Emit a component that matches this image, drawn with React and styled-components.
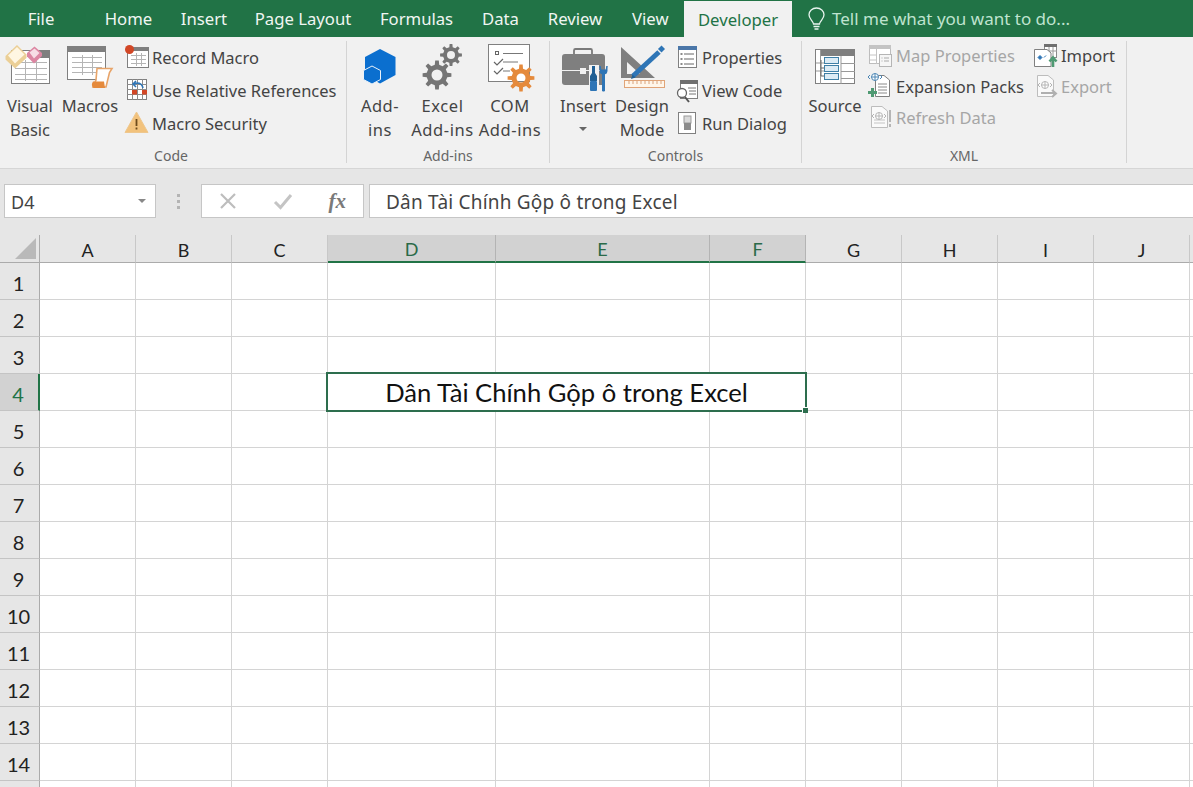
import React from 'react';
import styled, { createGlobalStyle } from 'styled-components';

const UI_FONT = '"Noto Sans", "Open Sans", sans-serif';
const SHEET_FONT = 'Lato, "Noto Sans", sans-serif';
const GREEN = '#217346';
const ICON_GRAY = '#7f7f7f';
const BLUE = '#2e75b6';
const ORANGE = '#e58a3c';

const GlobalStyle = createGlobalStyle`
  html, body {
    margin: 0;
    height: 100%;
    overflow: hidden;
    background: #fff;
  }
`;

const Page = styled.div`
  width: 1193px;
  height: 787px;
  overflow: hidden;
  font-family: ${UI_FONT};
  color: #444;
`;

/* tabs */
const TabBar = styled.div`
  display: flex;
  height: 37px;
  background: ${GREEN};
`;

const Tab = styled.div`
  display: flex;
  align-items: center;
  justify-content: center;
  flex: none;
  width: ${({ $w }) => $w}px;
  margin: ${({ $active }) => ($active ? '1px 0 0' : '0')};
  margin-right: ${({ $after }) => $after || 0}px;
  font-size: 16.7px;
  background: ${({ $active }) => ($active ? '#f1f1f1' : 'transparent')};
  color: ${({ $active }) => ($active ? GREEN : '#f0f6f2')};
`;

const TellMe = styled.div`
  display: flex;
  align-items: center;
  gap: 7px;
  margin-left: 16px;
  font-size: 17px;
  color: #bfe3cf;
`;

/* ribbon */
const Ribbon = styled.div`
  display: flex;
  height: 132px;
  box-sizing: border-box;
  background: #f1f1f1;
  border-bottom: 1px solid #d6d6d6;
`;

const Group = styled.section`
  display: flex;
  flex-direction: column;
  flex: none;
  box-sizing: border-box;
  width: ${({ $w }) => $w}px;
  height: 122px;
  margin-top: 4px;
  border-right: 1px solid #d4d4d4;
`;

const GroupBody = styled.div`
  display: flex;
  flex: 1;
  min-height: 0;
  gap: ${({ $gap }) => $gap || 0}px;
  padding-left: ${({ $pad }) => $pad || 0}px;
`;

const GroupLabel = styled.div`
  height: 14px;
  padding-right: ${({ $nudge }) => $nudge || 0}px;
  line-height: 14px;
  text-align: center;
  font-size: 14px;
  color: #666;
`;

const LargeButton = styled.div`
  flex: none;
  width: ${({ $w }) => $w}px;
  margin-left: ${({ $left }) => $left || 0}px;
  padding-top: 3px;
  font-size: 16.5px;
  line-height: 24px;
  letter-spacing: ${({ $track }) => $track || 0}px;
  text-align: center;
  white-space: pre-line;
  color: #444;
`;

const LargeLabel = styled.div`
  margin-top: 4px;
`;

const Caret = styled.div`
  width: 0;
  height: 0;
  margin: ${({ $inline }) => ($inline ? '0' : '9px auto 0')};
  border-left: 4px solid transparent;
  border-right: 4px solid transparent;
  border-top: 4px solid ${({ $inline }) => ($inline ? '#888' : '#666')};
`;

const SmallColumn = styled.div`
  display: flex;
  flex-direction: column;
  flex: none;
  margin: ${({ $top }) => $top || 0}px 0 0 ${({ $left }) => $left || 0}px;
`;

const SmallItem = styled.div`
  display: flex;
  align-items: center;
  height: ${({ $h }) => $h}px;
  gap: ${({ $gap }) => $gap}px;
  font-size: 16.5px;
  white-space: nowrap;
  color: ${({ $disabled }) => ($disabled ? '#a6a6a6' : '#444')};
`;

const Glyph = styled.svg`
  display: block;
  flex: none;
  overflow: visible;
`;

/* formula bar */
const FormulaStrip = styled.div`
  display: flex;
  height: 66px;
  box-sizing: border-box;
  padding: 15px 0 0 4px;
  background: #e6e6e6;
`;

const FieldBox = styled.div`
  display: flex;
  align-items: center;
  flex: ${({ $grow }) => ($grow ? 1 : 'none')};
  box-sizing: border-box;
  width: ${({ $w }) => ($w ? `${$w}px` : 'auto')};
  height: 34px;
  margin-left: ${({ $left }) => $left || 0}px;
  background: #fff;
  border: 1px solid #c6c6c6;
  border-right-width: ${({ $grow }) => ($grow ? 0 : 1)}px;
  padding: 0 ${({ $pr }) => $pr || 0}px 0 ${({ $pl }) => $pl || 0}px;
  font-size: 18px;
  color: #444;
`;

const NameText = styled.span`
  flex: 1;
  padding-top: 1px;
`;

const GripDots = styled.div`
  display: flex;
  flex-direction: column;
  justify-content: center;
  align-items: center;
  gap: 3px;
  flex: none;
  width: 45px;
  height: 34px;
  i {
    width: 3px;
    height: 3px;
    background: #b4b4b4;
  }
`;

const FxButtons = styled.div`
  display: flex;
  align-items: center;
  justify-content: space-between;
  flex: 1;
  padding: 0 17px 0 17px;
`;

const FxMark = styled.span`
  font-family: "Liberation Serif", serif;
  font-style: italic;
  font-weight: 700;
  font-size: 21px;
  color: #7a7a7a;
`;

const FormulaValue = styled.span`
  padding-top: 1px;
  font-size: 19px;
  letter-spacing: 0.2px;
  white-space: nowrap;
`;

/* sheet */
const Sheet = styled.div`
  display: grid;
  grid-template-columns: 40px 96px 96px 96px 168px 214px repeat(6, 96px);
  grid-template-rows: 28px;
  grid-auto-rows: 37px;
  font-family: ${SHEET_FONT};
`;

const Corner = styled.div`
  display: flex;
  box-sizing: border-box;
  background: #e6e6e6;
  border-right: 1px solid #ababab;
  border-bottom: 1px solid #ababab;
  padding: 3px 0 0 15px;
`;

const ColHeader = styled.div`
  display: flex;
  align-items: center;
  justify-content: center;
  box-sizing: border-box;
  padding-top: 2px;
  font-size: 18px;
  background: ${({ $on }) => ($on ? '#d2d2d2' : '#e6e6e6')};
  color: ${({ $on }) => ($on ? '#2a6a48' : '#222')};
  border-right: 1px solid ${({ $on }) => ($on ? '#b4b4b4' : '#c8c8c8')};
  border-bottom: ${({ $on }) => ($on ? `2px solid ${GREEN}` : '1px solid #ababab')};
`;

const RowHeader = styled.div`
  display: flex;
  align-items: center;
  justify-content: center;
  box-sizing: border-box;
  grid-column: 1;
  padding: 3px 2px 0 0;
  font-size: 20px;
  background: ${({ $on }) => ($on ? '#d2d2d2' : '#e6e6e6')};
  color: ${({ $on }) => ($on ? GREEN : '#222')};
  border-right: ${({ $on }) => ($on ? `2px solid ${GREEN}` : '1px solid #ababab')};
  border-bottom: 1px solid #c4c4c4;
`;

const Cell = styled.div`
  box-sizing: border-box;
  background: #fff;
  border-right: 1px solid #d4d4d4;
  border-bottom: 1px solid #d4d4d4;
`;

const MergedCell = styled.div`
  position: relative;
  z-index: 1;
  display: flex;
  align-items: center;
  justify-content: center;
  grid-column: 5 / 8;
  margin: 0 1px 1px 0;
  background: #fff;
  outline: 2px solid #2d6e4e;
  font-size: 25.6px;
  color: #111;
  white-space: nowrap;
`;

const FillHandle = styled.i`
  position: absolute;
  right: -3px;
  bottom: -3px;
  width: 5px;
  height: 5px;
  background: #2d6e4e;
  border: 1px solid #fff;
  border-width: 1px 0 0 1px;
`;

const Art = ({ x, y, w, h, children }) => (
  <Glyph width={w} height={h} viewBox={`${x} ${y} ${w} ${h}`} fill="none">
    {children}
  </Glyph>
);

const gearPath = (cx, cy, outer, inner, hole, teeth = 8) => {
  const pts = [];
  const step = (Math.PI * 2) / teeth;
  for (let i = 0; i < teeth; i += 1) {
    const a = i * step;
    [[-0.27, inner], [-0.16, outer], [0.16, outer], [0.27, inner]].forEach(([k, r]) => {
      pts.push(`${(cx + r * Math.cos(a + k * step)).toFixed(2)} ${(cy + r * Math.sin(a + k * step)).toFixed(2)}`);
    });
  }
  const ring = `M${cx - hole} ${cy}a${hole} ${hole} 0 1 0 ${hole * 2} 0a${hole} ${hole} 0 1 0 ${-hole * 2} 0Z`;
  return `M${pts.join('L')}Z${ring}`;
};

const Gear = ({ cx, cy, outer, inner, hole, fill }) => (
  <path d={gearPath(cx, cy, outer, inner, hole)} fill={fill} fillRule="evenodd" />
);

const SheetLines = ({ x1, x2, ys, xs, y1, y2, color = '#b5b5b5' }) => (
  <g stroke={color} strokeWidth="1">
    {ys.map((y) => (
      <path key={`h${y}`} d={`M${x1} ${y}H${x2}`} />
    ))}
    {(xs || []).map((x) => (
      <path key={`v${x}`} d={`M${x} ${y1}V${y2}`} />
    ))}
  </g>
);

const Globe = ({ cx, cy, color }) => (
  <g stroke={color} strokeWidth="1">
    <circle cx={cx} cy={cy} r="3.5" fill="#fff" />
    <path d={`M${cx - 3.5} ${cy}h7M${cx} ${cy - 3.5}v7`} />
    <path d={`M${cx - 5} ${cy - 2}l-2 2l2 2M${cx + 5} ${cy - 2}l2 2l-2 2`} />
  </g>
);

const VisualBasicIcon = () => (
  <Art x={3} y={44} w={54} h={46}>
    <rect x="11.5" y="50.5" width="38" height="33" fill="#fff" stroke="#808080" />
    <rect x="40" y="50" width="10" height="8" fill={ICON_GRAY} />
    <SheetLines x1={15} x2={47} ys={[62.5, 68.5, 74.5, 79.5]} xs={[25.5, 36.5]} y1={60} y2={81} />
    <path d="M5.500 56L17 45L26.500 54.500V58L15 68.500L5.500 59.500Z" fill="#ebcf96" />
    <path d="M8 55.500L17 47L24.500 54.500L15 63.500Z" fill="#fff6e2" />
    <path d="M27 53L34.500 46.500L42 53V56L34 63.500L27 56.500Z" fill="#dc86a2" />
    <path d="M29.500 52.500L34.500 48.500L39.500 53L34 58.500Z" fill="#f7dde5" />
  </Art>
);

const MacrosIcon = () => (
  <Art x={60} y={44} w={60} h={46}>
    <rect x="67.5" y="46.5" width="38" height="33" fill="#fff" stroke="#808080" />
    <rect x="67" y="46" width="39" height="6" fill={ICON_GRAY} />
    <SheetLines x1={72} x2={102} ys={[57.5, 62.5, 67.5, 72.5]} xs={[82.5, 92.5]} y1={55} y2={75} />
    <path d="M97 68.5H112L109.5 72.5L106 87H93L96 80Z" fill="#fff" stroke="#e8a469" strokeWidth="1.6" />
    <path d="M93 81.5H104L105 88H93.5Q90.5 85 93 81.5Z" fill={ORANGE} />
  </Art>
);

const RecordIcon = () => (
  <Art x={125} y={41} w={25} h={33}>
    <rect x="127.5" y="47.5" width="21" height="20" fill="#fff" stroke="#808080" />
    <rect x="127" y="47" width="22" height="4" fill={ICON_GRAY} />
    <SheetLines x1={131} x2={146} ys={[55.5, 59.5, 63.5]} xs={[136.5, 141.5]} y1={53} y2={66} />
    <circle cx="129.5" cy="49.5" r="4.5" fill="#d24726" />
  </Art>
);

const RelativeIcon = () => (
  <Art x={125} y={74} w={25} h={33}>
    <rect x="127.5" y="79.5" width="19" height="20" fill="#fff" stroke="#808080" />
    <SheetLines x1={127} x2={147} ys={[84.5, 89.5, 94.5]} xs={[132.5, 137.5, 142.5]} y1={79} y2={100} color="#8c8c8c" />
    <rect x="132" y="90" width="5" height="4.5" fill="#d24726" />
    <rect x="142" y="90" width="5" height="4.5" fill="#d24726" />
    <path d="M143 88q-1-5-6-5l-3 1M136 81l-3 3l3 3" stroke={BLUE} strokeWidth="1.6" />
  </Art>
);

const SecurityIcon = () => (
  <Art x={125} y={107} w={25} h={33}>
    <path d="M136.5 112L148 132.5H125Z" fill="#f2c27c" stroke="#eec78e" strokeLinejoin="round" />
    <path d="M136.5 119v7M136.5 127.5v2" stroke="#6e4b1b" strokeWidth="1.8" />
  </Art>
);

const AddInIcon = () => (
  <Art x={360} y={44} w={40} h={46}>
    <path d="M380 49L395.500 57V75L380 83.500L365 75V57Z" fill="#0b6fcf" />
    <path d="M372 66L380.500 70.500V79.500L372 84L363.500 79.500V70.500Z" fill="#0b6fcf" stroke="#eaf2fa" strokeWidth="1" />
  </Art>
);

const ExcelAddInIcon = () => (
  <Art x={409} y={44} w={67} h={46}>
    <Gear cx={437} cy={75} outer={14.5} inner={10.5} hole={5.5} fill="#757575" />
    <Gear cx={451} cy={55} outer={11} inner={8} hole={4} fill="#757575" />
  </Art>
);

const ComAddInIcon = () => (
  <Art x={476} y={44} w={68} h={46}>
    <rect x="488.5" y="44.5" width="41" height="37" fill="#fff" stroke="#808080" />
    <rect x="495.5" y="51.5" width="3" height="3" stroke="#666" />
    <path d="M503 53.5H523M503 62H518M503 71H510" stroke="#777" />
    <path d="M494 62l3 3l6-6M494 71l3 3l6-6" stroke="#666" strokeWidth="1.2" />
    <Gear cx={521} cy={78} outer={13.5} inner={9.5} hole={4.5} fill={ORANGE} />
  </Art>
);

const InsertIcon = () => (
  <Art x={558} y={44} w={50} h={46}>
    <path d="M574 54V50.5Q574 49 575.5 49H590.5Q592 49 592 50.5V54" stroke="#7a7a7a" strokeWidth="1.8" />
    <rect x="562" y="54" width="43" height="31" rx="3" fill={ICON_GRAY} />
    <path d="M562 70.5H605" stroke="#f1f1f1" />
    <rect x="580" y="68" width="6" height="6" fill="#f1f1f1" />
    <path d="M589 65h10v26h-10Z" fill="#f1f1f1" />
    <path d="M592 66h3v7l2 3v5h-7v-5l2-3Z" fill="#1f5f94" />
    <rect x="590" y="81" width="7" height="10" rx="1" fill={BLUE} />
    <path d="M600 66v5q0 3 2.500 3v17h2v-17q2.500 0 2.500-3v-5l-1 4h-5Z" fill={BLUE} stroke={BLUE} />
  </Art>
);

const DesignIcon = () => (
  <Art x={612} y={44} w={60} h={46}>
    <path d="M621 47L655 78H621ZM627 62V74H640Z" fill={ICON_GRAY} fillRule="evenodd" />
    <path d="M633 76L659 52" stroke={BLUE} strokeWidth="5" />
    <path d="M631 79l1.500-4.500l3 3Z" fill="#1f5f94" />
    <rect x="659" y="46.500" width="5" height="5" transform="rotate(45 661.5 49)" fill={BLUE} />
    <rect x="624.500" y="80.500" width="40" height="7" fill="#fff6ea" stroke="#e0a478" />
    <path d="M629 81v3M633 81v3M637 81v3M641 81v3M645 81v3M649 81v3M653 81v3M657 81v3M661 81v3" stroke="#d9a27a" />
  </Art>
);

const PropertiesIcon = () => (
  <Art x={676} y={41} w={24} h={33}>
    <rect x="678.500" y="46.500" width="18" height="21" fill="#fff" stroke="#808080" />
    <rect x="678" y="46" width="19" height="4" fill="#4a76a8" />
    <path d="M684 54H694M684 59H694M684 64H694" stroke="#666" />
    <path d="M680.500 54h2M680.500 59h2M680.500 64h2" stroke="#666" strokeWidth="1.400" />
  </Art>
);

const ViewCodeIcon = () => (
  <Art x={676} y={74} w={24} h={33}>
    <rect x="680.500" y="80.500" width="17" height="18" fill="#fff" stroke="#808080" />
    <rect x="680" y="80" width="18" height="4" fill="#6f6f6f" />
    <path d="M688 88H696M689 91H696M689 94H696" stroke="#777" />
    <circle cx="682" cy="93" r="4.500" fill="#fff" stroke="#666" strokeWidth="1.300" />
    <path d="M685 97L689 102" stroke="#555" strokeWidth="2" />
  </Art>
);

const RunDialogIcon = () => (
  <Art x={676} y={107} w={24} h={33}>
    <rect x="678.500" y="112.500" width="17" height="21" fill="#fff" stroke="#808080" />
    <rect x="684" y="116" width="7" height="7" fill="#d9d9d9" stroke="#9a9a9a" />
    <rect x="684" y="123" width="7" height="7" fill="#8c8c8c" />
  </Art>
);

const SourceIcon = () => (
  <Art x={807} y={44} w={56} h={46}>
    <rect x="815.500" y="49.500" width="39" height="34" fill="#fff" stroke="#808080" />
    <rect x="821" y="49" width="34" height="7" fill={ICON_GRAY} />
    <path d="M820.500 50V84M841 56V84M841 63.500H855M841 71.500H855M841 78.500H855M816 63H824M816 71H824" stroke="#999" />
    <path d="M821 60V76H824M821 68H824" stroke="#666" />
    <rect x="824.500" y="57.500" width="14" height="6" fill="#dcebf5" stroke="#3f7fa6" />
    <rect x="824.500" y="65.500" width="14" height="6" fill="#dcebf5" stroke="#3f7fa6" />
    <rect x="824.500" y="73.500" width="14" height="6" fill="#dcebf5" stroke="#3f7fa6" />
  </Art>
);

const MapIcon = () => (
  <Art x={868} y={40} w={24} h={31}>
    <rect x="869.500" y="45.500" width="21" height="18" fill="#fff" stroke="#bdbdbd" />
    <rect x="869" y="45" width="22" height="4" fill="#c4c4c4" />
    <path d="M876.500 49V64M870 55H876M870 60H876" stroke="#c4c4c4" />
    <rect x="879.500" y="54.500" width="12" height="12" fill="#f6f6f6" stroke="#b5b5b5" />
    <path d="M884 58H889M884 61H889M881.500 58h1M881.500 61h1" stroke="#aaa" />
  </Art>
);

const ExpansionIcon = () => (
  <Art x={868} y={71} w={24} h={31}>
    <path d="M875.500 75.500H884L889.500 80V96.500H875.500Z" fill="#fff" stroke="#7f7f7f" />
    <path d="M878 84H887M878 87H887M878 90H887M878 93H887" stroke="#8a8a8a" />
    <Globe cx={875} cy={77} color="#4c86b4" />
    <path d="M872.500 88V97M868 92.500H877" stroke="#4f9a73" strokeWidth="3" />
  </Art>
);

const RefreshIcon = () => (
  <Art x={868} y={102} w={24} h={31}>
    <path d="M871.500 106.500H882L887.500 111V127.500H871.500Z" fill="#fafafa" stroke="#bdbdbd" />
    <path d="M874 120H885M874 123H885" stroke="#c4c4c4" />
    <Globe cx={879} cy={116} color="#b5b5b5" />
    <path d="M890 110V122M890 124V127" stroke="#b5b5b5" strokeWidth="2" />
  </Art>
);

const ImportIcon = () => (
  <Art x={1033} y={40} w={25} h={31}>
    <rect x="1043.500" y="44.500" width="12" height="13" fill="#fff" stroke="#8a8a8a" />
    <rect x="1043" y="44" width="13" height="3" fill="#6f6f6f" />
    <path d="M1048 47V58M1052 47V58M1044 51H1056" stroke="#9a9a9a" />
    <path d="M1033.500 49.500H1046L1050 53V66.500H1033.500Z" fill="#fff" stroke="#808080" />
    <path d="M1037 57.500l2-2l2 2l-2 2ZM1043 57.500l2-2" fill="#2e75b6" stroke="#2e75b6" />
    <path d="M1052 67V59M1048.500 61.500L1052 57.500L1055.500 61.500" stroke="#4f9a73" strokeWidth="2.600" />
  </Art>
);

const ExportIcon = () => (
  <Art x={1033} y={71} w={25} h={31}>
    <path d="M1036.500 75.500H1047L1052.500 80V96.500H1036.500Z" fill="#fafafa" stroke="#bdbdbd" />
    <Globe cx={1044} cy={85} color="#b5b5b5" />
    <path d="M1040 93H1054M1051 90L1055 93.500L1051 97" stroke="#b0b0b0" strokeWidth="2" />
  </Art>
);

const BulbIcon = () => (
  <Glyph width="17" height="24" viewBox="0 0 17 24" fill="none">
    <path
      d="M5.500 17C5 13.500 1 12 1 7.800C1 3.800 4.300 1 8.500 1S16 3.800 16 7.800C16 12 12 13.500 11.500 17Z"
      stroke="#e8f4ee"
      strokeWidth="1.300"
    />
    <path d="M5.500 19.500H11.500M6.500 22H10.500" stroke="#e8f4ee" strokeWidth="1.300" />
  </Glyph>
);

const TABS = [
  { name: 'File', w: 82, after: 7.5 },
  { name: 'Home', w: 78 },
  { name: 'Insert', w: 73 },
  { name: 'Page Layout', w: 125 },
  { name: 'Formulas', w: 102 },
  { name: 'Data', w: 66 },
  { name: 'Review', w: 83 },
  { name: 'View', w: 67.5 },
];

const COLUMNS = ['A', 'B', 'C', 'D', 'E', 'F', 'G', 'H', 'I', 'J', 'K'];
const SELECTED_COLUMNS = ['D', 'E', 'F'];
const OFFSCREEN_COLUMN = 'K';
const ROWS = Array.from({ length: 15 }, (_, i) => i + 1);
const LAST_VISIBLE_LABEL = 14;
const CELL_TEXT = 'Dân Tài Chính Gộp ô trong Excel';

const App = () => (
  <Page>
    <GlobalStyle />
    <TabBar>
      {TABS.map((tab) => (
        <Tab key={tab.name} $w={tab.w} $after={tab.after}>
          {tab.name}
        </Tab>
      ))}
      <Tab $w={108} $active>
        Developer
      </Tab>
      <TellMe>
        <BulbIcon />
        Tell me what you want to do...
      </TellMe>
    </TabBar>

    <Ribbon>
      <Group $w={347}>
        <GroupBody $pad={3}>
          <LargeButton $w={54}>
            <VisualBasicIcon />
            <LargeLabel>{'Visual\nBasic'}</LargeLabel>
          </LargeButton>
          <LargeButton $w={60} $left={3}>
            <MacrosIcon />
            <LargeLabel>Macros</LargeLabel>
          </LargeButton>
          <SmallColumn $left={5}>
            <SmallItem $h={33} $gap={2}>
              <RecordIcon />
              Record Macro
            </SmallItem>
            <SmallItem $h={33} $gap={2}>
              <RelativeIcon />
              Use Relative References
            </SmallItem>
            <SmallItem $h={33} $gap={2}>
              <SecurityIcon />
              Macro Security
            </SmallItem>
          </SmallColumn>
        </GroupBody>
        <GroupLabel $nudge={4}>Code</GroupLabel>
      </Group>

      <Group $w={203}>
        <GroupBody $pad={13}>
          <LargeButton $w={40} $track={0.5}>
            <AddInIcon />
            <LargeLabel>{'Add-\nins'}</LargeLabel>
          </LargeButton>
          <LargeButton $w={67} $left={9} $track={0.6}>
            <ExcelAddInIcon />
            <LargeLabel>{'Excel\nAdd-ins'}</LargeLabel>
          </LargeButton>
          <LargeButton $w={68} $track={0.6}>
            <ComAddInIcon />
            <LargeLabel>{'COM\nAdd-ins'}</LargeLabel>
          </LargeButton>
        </GroupBody>
        <GroupLabel>Add-ins</GroupLabel>
      </Group>

      <Group $w={252}>
        <GroupBody $pad={8} $gap={4}>
          <LargeButton $w={50}>
            <InsertIcon />
            <LargeLabel>Insert</LargeLabel>
            <Caret />
          </LargeButton>
          <LargeButton $w={60}>
            <DesignIcon />
            <LargeLabel>{'Design\nMode'}</LargeLabel>
          </LargeButton>
          <SmallColumn>
            <SmallItem $h={33} $gap={2}>
              <PropertiesIcon />
              Properties
            </SmallItem>
            <SmallItem $h={33} $gap={2}>
              <ViewCodeIcon />
              View Code
            </SmallItem>
            <SmallItem $h={33} $gap={2}>
              <RunDialogIcon />
              Run Dialog
            </SmallItem>
          </SmallColumn>
        </GroupBody>
        <GroupLabel>Controls</GroupLabel>
      </Group>

      <Group $w={325}>
        <GroupBody $pad={5}>
          <LargeButton $w={56}>
            <SourceIcon />
            <LargeLabel>Source</LargeLabel>
          </LargeButton>
          <SmallColumn $left={5} $top={-1}>
            <SmallItem $h={31} $gap={4} $disabled>
              <MapIcon />
              Map Properties
            </SmallItem>
            <SmallItem $h={31} $gap={4}>
              <ExpansionIcon />
              Expansion Packs
            </SmallItem>
            <SmallItem $h={31} $gap={4} $disabled>
              <RefreshIcon />
              Refresh Data
            </SmallItem>
          </SmallColumn>
          <SmallColumn $left={10} $top={-1}>
            <SmallItem $h={31} $gap={2}>
              <ImportIcon />
              Import
            </SmallItem>
            <SmallItem $h={31} $gap={2} $disabled>
              <ExportIcon />
              Export
            </SmallItem>
          </SmallColumn>
        </GroupBody>
        <GroupLabel>XML</GroupLabel>
      </Group>
    </Ribbon>

    <FormulaStrip>
      <FieldBox $w={152} $pl={6} $pr={9}>
        <NameText>D4</NameText>
        <Caret $inline />
      </FieldBox>
      <GripDots>
        <i />
        <i />
        <i />
      </GripDots>
      <FieldBox $w={163}>
        <FxButtons>
          <Glyph width="18" height="18" viewBox="0 0 18 18" fill="none">
            <path d="M2 2L16 16M16 2L2 16" stroke="#bdbdbd" strokeWidth="2.200" />
          </Glyph>
          <Glyph width="20" height="18" viewBox="0 0 20 18" fill="none">
            <path d="M2 10L7.500 15.500L18 3" stroke="#c4c4c4" strokeWidth="3" />
          </Glyph>
          <FxMark>fx</FxMark>
        </FxButtons>
      </FieldBox>
      <FieldBox $grow $pl={16} $left={5}>
        <FormulaValue>{CELL_TEXT}</FormulaValue>
      </FieldBox>
    </FormulaStrip>

    <Sheet>
      <Corner>
        <Glyph width="21" height="21" viewBox="0 0 21 21">
          <path d="M21 0V21H0Z" fill="#b9b9b9" />
        </Glyph>
      </Corner>
      {COLUMNS.map((col) => (
        <ColHeader key={col} $on={SELECTED_COLUMNS.includes(col)}>
          {col === OFFSCREEN_COLUMN ? '' : col}
        </ColHeader>
      ))}
      {ROWS.map((row) => (
        <React.Fragment key={row}>
          <RowHeader $on={row === 4}>{row <= LAST_VISIBLE_LABEL ? row : ''}</RowHeader>
          {row === 4 ? (
            <>
              {COLUMNS.slice(0, 3).map((col) => (
                <Cell key={col} />
              ))}
              <MergedCell>
                {CELL_TEXT}
                <FillHandle />
              </MergedCell>
              {COLUMNS.slice(6).map((col) => (
                <Cell key={col} />
              ))}
            </>
          ) : (
            COLUMNS.map((col) => <Cell key={col} />)
          )}
        </React.Fragment>
      ))}
    </Sheet>
  </Page>
);

export default App;
